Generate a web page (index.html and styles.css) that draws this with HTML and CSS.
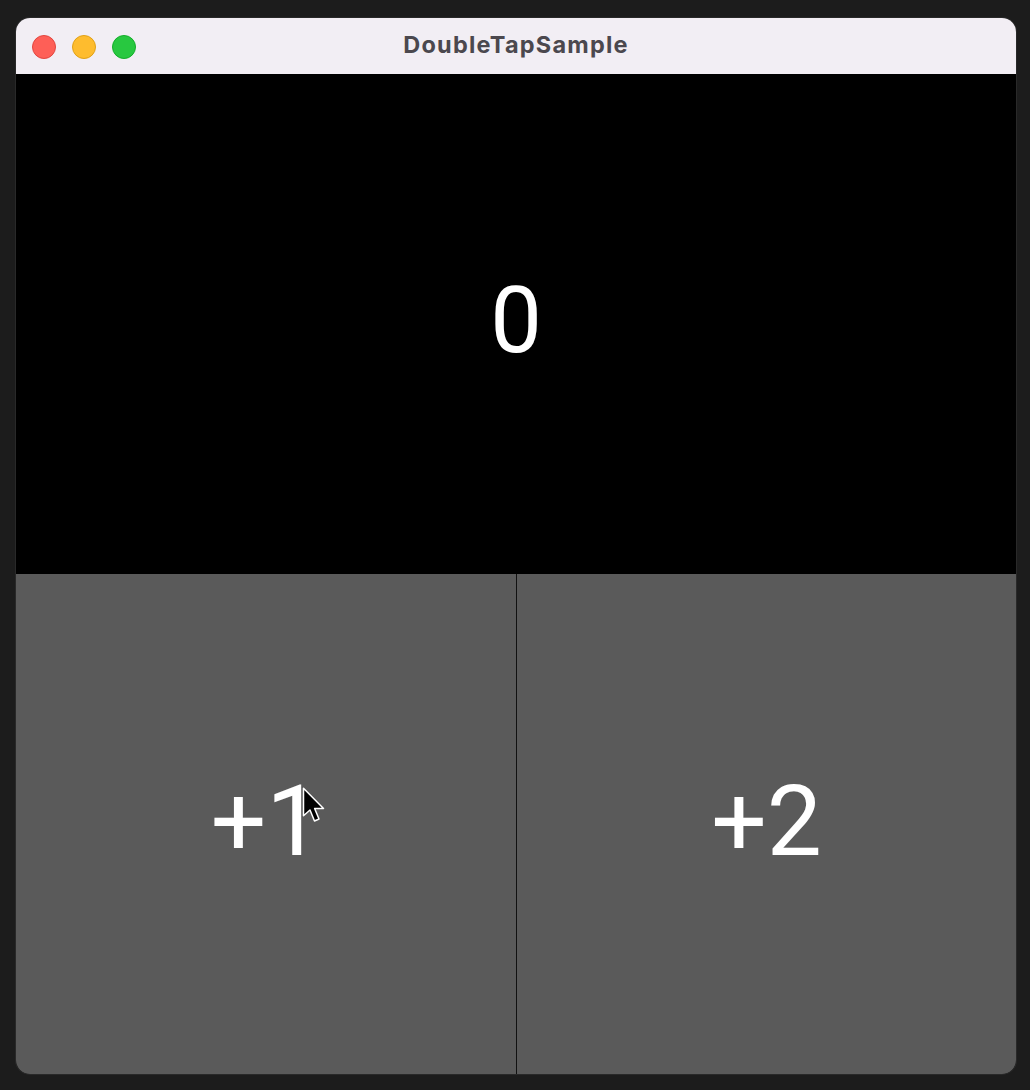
FILE: index.html
```html
<!DOCTYPE html>
<html lang="en">
<head>
<meta charset="utf-8">
<title>DoubleTapSample</title>
<link rel="stylesheet" href="styles.css">
</head>
<body>
<div class="window">
  <div class="titlebar">
    <div class="lights">
      <span class="light red"></span>
      <span class="light yellow"></span>
      <span class="light green"></span>
    </div>
    <div class="title">DoubleTapSample</div>
  </div>
  <div class="counter"><span class="value">0</span></div>
  <div class="buttons">
    <div class="btn"><span class="label">+1</span>
      <svg class="cursor" width="28" height="40" viewBox="0 0 22 32" xmlns="http://www.w3.org/2000/svg">
        <path d="M1 1 L1 23 L6.2 18.4 L9.8 27.2 L13.4 25.6 L9.9 17.2 L17 17.2 Z" fill="#000" stroke="#fff" stroke-width="1.2" stroke-linejoin="round"/>
      </svg>
    </div>
    <div class="btn"><span class="label">+2</span></div>
  </div>
</div>
</body>
</html>
```
FILE: styles.css
```css
html, body {
  margin: 0;
  padding: 0;
  background: #1c1c1c;
}
body {
  width: 1030px;
  height: 1090px;
  overflow: hidden;
  font-family: Roboto, "Liberation Sans", sans-serif;
}
.window {
  margin: 18px 0 0 16px;
  width: 1000px;
  height: 1056px;
  border-radius: 14px;
  overflow: hidden;
  display: flex;
  flex-direction: column;
  background: #000;
  box-shadow: 0 0 0 1px rgba(255,255,255,0.06);
}
.titlebar {
  height: 56px;
  flex: none;
  background: #f2eef4;
  display: flex;
  align-items: center;
  position: relative;
}
.lights {
  display: flex;
  gap: 16px;
  padding-left: 16px;
  margin-top: 2px;
}
.light {
  width: 24px;
  height: 24px;
  border-radius: 50%;
  box-sizing: border-box;
}
.red { background: #fe5f57; border: 1px solid #e2463f; }
.yellow { background: #febc2e; border: 1px solid #e1a116; }
.green { background: #28c840; border: 1px solid #14ae2a; }
.title {
  position: absolute;
  left: 0;
  right: 0;
  top: 0;
  text-align: center;
  font-family: Inter, "Liberation Sans", sans-serif;
  font-weight: 700;
  font-size: 23.5px;
  letter-spacing: 1.2px;
  line-height: 54px;
  color: #4b484e;
}
.counter {
  height: 500px;
  flex: none;
  display: flex;
  align-items: center;
  justify-content: center;
  background: #000;
}
.value {
  color: #fff;
  font-size: 92px;
  line-height: 1;
  margin-top: -7px;
}
.buttons {
  height: 500px;
  flex: none;
  display: flex;
  gap: 1px;
  background: #111;
}
.btn {
  position: relative;
  flex: 1;
  display: flex;
  align-items: center;
  justify-content: center;
  background: #5a5a5a;
}
.btn:first-child { flex: 0 0 500px; }
.label {
  color: #fff;
  font-size: 98px;
  line-height: 1;
  margin-top: -4px;
}
.cursor {
  position: absolute;
  left: 286px;
  top: 213px;
}
```
